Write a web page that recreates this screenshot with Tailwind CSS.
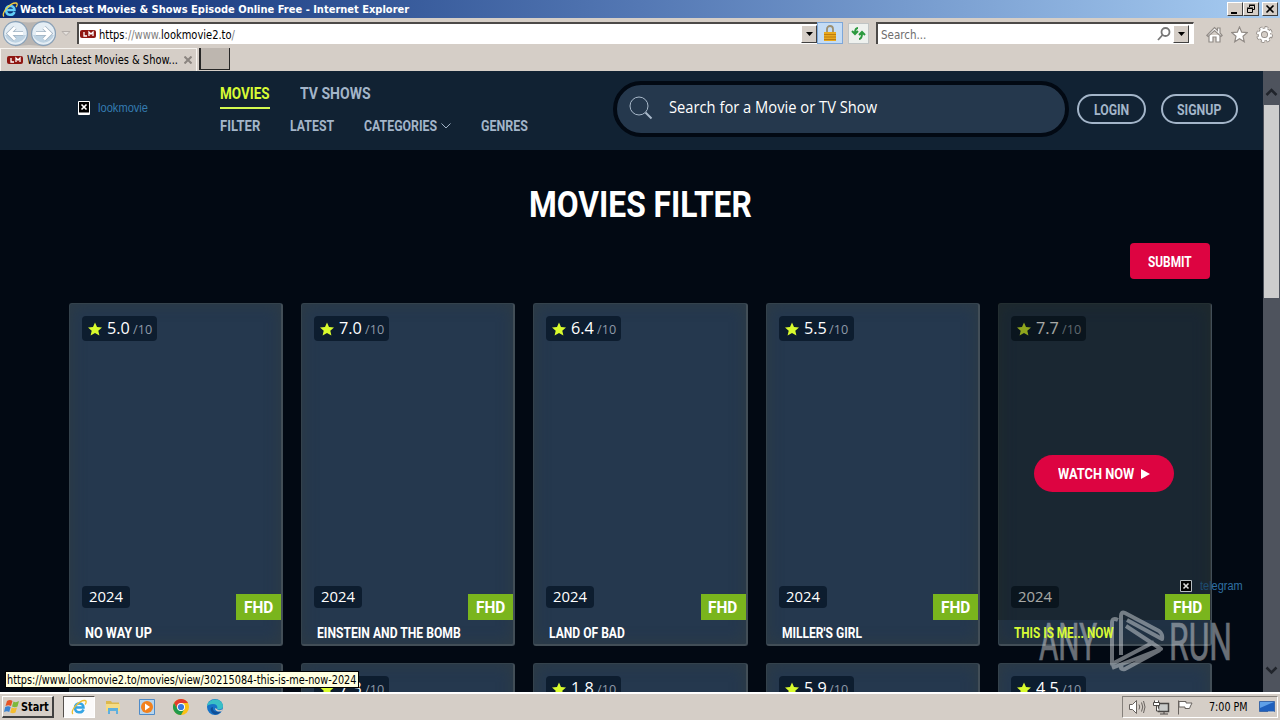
<!DOCTYPE html>
<html lang="en">
<head>
    <meta charset="UTF-8">
    <meta name="viewport" content="width=device-width, initial-scale=1.0">
    <title>Watch Latest Movies & Shows Episode Online Free</title>
    <script src="https://cdn.jsdelivr.net/npm/@tailwindcss/browser@4"></script>
</head>
<body class="relative flex h-[720px] w-[1280px] flex-col overflow-hidden bg-[#d5cec7] font-['DejaVu_Sans_Condensed',sans-serif] text-[11px] leading-none text-black">
    <!-- Window title -->
    <div class="flex h-[18px] shrink-0 items-center bg-linear-to-r from-[#0b2a72] via-[#5478b4] via-50% to-[#a8cdf2] pl-[2px]">
        <svg class="mr-[2px] h-[17px] w-4 shrink-0" viewBox="0 0 16 16"><path d="M12.500 10.500C11 14.500 4 14.500 4 8.500 4 3 12.500 3 12.500 8.500H5" fill="none" stroke="#62cdf7" stroke-width="2.500"/><path d="M2 15C-1 12 8 1 14 1.500c2 .3 1 3 0 4" fill="none" stroke="#f4cf3e" stroke-width="1.300"/></svg>
        <span data-fit="389" class="font-['DejaVu_Sans'] text-[11px] font-bold text-white">Watch Latest Movies &amp; Shows Episode Online Free - Internet Explorer</span>
        <div class="mr-[2px] ml-auto flex">
            <div class="flex h-[14px] w-4 items-center justify-center border border-t-white border-r-[#404040] border-b-[#404040] border-l-white bg-[#d5cec7]"><svg class="h-[10px] w-[10px]" viewBox="0 0 10 10"><path d="M1 8h6v2H1z"/></svg></div>
            <div class="mr-[3px] flex h-[14px] w-4 items-center justify-center border border-t-white border-r-[#404040] border-b-[#404040] border-l-white bg-[#d5cec7]"><svg class="h-[10px] w-[10px]" viewBox="0 0 10 10" fill="none" stroke="#000"><path d="M3.500 3V1.500h5v4H7M3 1h6M1.500 4.500h5v4h-5zM1 4h6"/></svg></div>
            <div class="flex h-[14px] w-4 items-center justify-center border border-t-white border-r-[#404040] border-b-[#404040] border-l-white bg-[#d5cec7]"><svg class="h-[10px] w-[10px]" viewBox="0 0 10 10" stroke="#000" stroke-width="1.600"><path d="M1.500 1.500l7 7M8.500 1.500l-7 7"/></svg></div>
        </div>
    </div>

    <!-- Address bar -->
    <div class="flex h-[30px] shrink-0 items-center">
        <svg class="h-[30px] w-[77px] shrink-0" viewBox="0 0 77 30">
            <path d="M15 2.500q14 4 28 0a13 13 0 010 26q-14-3-28 0z" fill="#b9b5b2"/>
            <circle cx="15.500" cy="15.500" r="12.500" fill="#87a0b8"/><circle cx="43.500" cy="15.500" r="12.500" fill="#87a0b8"/>
            <circle cx="15.500" cy="15.500" r="11.300" fill="#e4edf4"/><circle cx="43.500" cy="15.500" r="11.300" fill="#e4edf4"/>
            <path d="M5 17h21a11 11 0 01-21 0zM33 17h21a11 11 0 01-21 0z" fill="#bdd2e2"/>
            <path d="M23 15.500H10M15 9.500l-6 6 6 6M36 15.500h13M44 9.500l6 6-6 6" fill="none" stroke="#a0b2c2" stroke-width="4.500"/>
            <path d="M23 15.500H10M15 9.500l-6 6 6 6M36 15.500h13M44 9.500l6 6-6 6" fill="none" stroke="#fff" stroke-width="3"/>
            <path d="M62 13.500h8l-4 4z" fill="#e4e0dc" stroke="#b4aeaa"/>
        </svg>
        <div class="flex h-[22px] w-[740px] items-center border-t-2 border-l-2 border-[#4c4a48] bg-white pl-px">
            <svg class="mr-[3px] h-[10px] w-4 shrink-0" viewBox="0 0 16 10"><rect y="1" width="16" height="8" rx="2" fill="#8f1712"/><path d="M4 3v4h3M9 7V3l2 2 2-2v4" fill="none" stroke="#fff" stroke-width="1.300"/></svg>
            <span data-fit="136" class="pt-px text-[12px] text-[#808080]"><span class="text-black">https</span>://www.<span class="text-black">lookmovie2.to</span>/</span>
            <div class="ml-auto flex h-[18px] w-4 items-center justify-center border border-t-white border-r-[#404040] border-b-[#404040] border-l-white bg-[#d5cec7]"><svg class="h-1 w-[7px]" viewBox="0 0 7 4"><path d="M0 0h7L3.500 4z"/></svg></div>
        </div>
        <div class="flex h-[22px] w-[26px] items-center justify-center border border-[#7da7d9] bg-[#c4dcf5]">
            <svg class="h-4 w-[14px]" viewBox="0 0 14 16"><path d="M4 8V4a3 3 0 016 0v4" fill="none" stroke="#9c8f70" stroke-width="1.800"/><path d="M1 7h12v9H1z" fill="#e9a91f"/><path d="M1 9.500h12M1 12h12M1 14.500h12" stroke="#bd7d10"/></svg>
        </div>
        <div class="ml-[5px] flex h-[21px] w-[21px] items-center justify-center border border-[#c0c4c4] bg-[#eef1ee]">
            <svg class="h-[15px] w-[15px]" viewBox="0 0 15 15" fill="none" stroke="#2b9a3e" stroke-width="2"><path d="M7 2Q4 2 4 7M1 5l3 3 3-3M8 13q3 0 3-6M8 9l3-3 3 3"/></svg>
        </div>
        <div class="ml-[7px] flex h-[22px] w-[318px] items-center border-t-2 border-r border-l-2 border-[#4c4a48] border-r-white bg-white pl-[3px]">
            <span data-fit="45" class="pt-px text-[12px] text-[#6d6d6d]">Search...</span>
            <svg class="mr-[2px] ml-auto h-[14px] w-[14px]" viewBox="0 0 14 14" fill="none" stroke="#777" stroke-width="1.800"><circle cx="8.500" cy="5" r="4"/><path d="M5.500 8L1 13"/></svg>
            <div class="mr-1 flex h-[18px] w-4 items-center justify-center border border-t-white border-r-[#404040] border-b-[#404040] border-l-white bg-[#d5cec7]"><svg class="h-1 w-[7px]" viewBox="0 0 7 4"><path d="M0 0h7L3.500 4z"/></svg></div>
        </div>
        <div class="ml-[12px] flex gap-[8px] pt-[3px]">
            <svg class="h-[17px] w-[17px]" viewBox="0 0 17 17" fill="#fff" stroke="#918b86" stroke-width="1.200"><path d="M3 9v7h4v-5h3v5h4V9M.8 9.500L8.500 1.500l3 3V2H14v5l2.200 2.500-1.200 1L8.500 4.500l-6.500 6z"/></svg>
            <svg class="h-[17px] w-[17px]" viewBox="0 0 17 17" fill="#fff" stroke="#918b86" stroke-width="1.200"><path d="M8.500 1l2.200 5.200 5.500.4-4.200 3.700 1.300 5.500-4.800-3-4.800 3L5 10.300.8 6.600l5.500-.4z"/></svg>
            <svg class="h-[17px] w-[17px]" viewBox="0 0 17 17" fill="none"><circle cx="8.500" cy="8.500" r="6.600" stroke="#918b86" stroke-width="3.600" stroke-dasharray="3.200 1.980"/><circle cx="8.500" cy="8.500" r="4.700" stroke="#918b86" stroke-width="4.200"/><circle cx="8.500" cy="8.500" r="6.300" stroke="#fff" stroke-width="2.400" stroke-dasharray="2.300 2.650"/><circle cx="8.500" cy="8.500" r="4.700" stroke="#fff" stroke-width="2.400"/></svg>
        </div>
    </div>

    <!-- Tabs -->
    <div class="flex h-[23px] shrink-0">
        <div class="flex w-[197px] items-center border-t border-r border-l border-[#f7f4f0] pl-[6px]">
            <svg class="mr-[4px] h-[10px] w-4 shrink-0" viewBox="0 0 16 10"><rect y="1" width="16" height="8" rx="2" fill="#8f1712"/><path d="M4 3v4h3M9 7V3l2 2 2-2v4" fill="none" stroke="#fff" stroke-width="1.300"/></svg>
            <span data-fit="151" class="text-[12px]">Watch Latest Movies &amp; Show...</span>
            <svg class="mr-[4px] ml-auto h-2 w-2" viewBox="0 0 8 8" stroke="#8b8580" stroke-width="2"><path d="M.5.5l7 7M7.500.5l-7 7"/></svg>
        </div>
        <div class="ml-[2px] h-[22px] w-[31px] border-r border-b border-l-2 border-[#262626] bg-[#bdb6af]"></div>
    </div>

    <!-- Page viewport -->
    <div class="flex h-[621px] shrink-0 overflow-hidden">
        <div class="relative h-full w-[1263px] overflow-hidden bg-[#020913] font-[Roboto,sans-serif] text-white">
            <header class="flex h-[79px] bg-[#112233]">
                <div class="flex h-[74px] w-[220px] items-center pl-[78px]">
                    <svg class="mr-2 h-[14px] w-3" viewBox="0 0 12 14"><path d="M.5.5h11v13H.5z" fill="#000" stroke="#fff"/><path d="M1 11.500h10V13H1z" fill="#fff"/><path d="M3.500 3.500l5 5M8.500 3.500l-5 5" stroke="#fff" stroke-width="1.600"/></svg>
                    <span data-fit="50" class="pb-px font-['Liberation_Sans'] text-[12px] text-[#347bb0]">lookmovie</span>
                </div>
                <nav class="w-[393px] font-bold text-[#a3b5c9]">
                    <div class="flex gap-[30px] pt-3 text-[17px]">
                        <a class="flex h-[26px] w-[50px] border-b-2 border-[#d3fa4f] pt-[2px] text-[#d8fb35]"><span data-fit="50">MOVIES</span></a>
                        <a class="pt-[2px]"><span data-fit="71">TV SHOWS</span></a>
                    </div>
                    <div class="flex items-center gap-[30px] pt-[10px] text-[14px]">
                        <span data-fit="40">FILTER</span>
                        <span data-fit="44">LATEST</span>
                        <span class="flex w-[87px] items-center gap-[4px]"><span data-fit="73">CATEGORIES</span><svg class="h-[6px] w-[10px]" viewBox="0 0 10 6" fill="none" stroke="#a3b5c9"><path d="M.5.5L5 5 9.500.5"/></svg></span>
                        <span data-fit="47">GENRES</span>
                    </div>
                </nav>
                <div class="mt-[10px] flex h-[56px] w-[456px] items-center rounded-full border-4 border-[#020913] bg-[#25384d] pb-[2px] pl-[12px]">
                    <svg class="mr-[16px] h-6 w-6" viewBox="0 0 24 24" fill="none" stroke="#a9b9ca"><circle cx="10" cy="10" r="9"/><path d="M16.500 16.500l6 6" stroke-width="2"/></svg>
                    <span data-fit="208" class="font-['Open_Sans'] text-[15.500px]">Search for a Movie or TV Show</span>
                </div>
                <div class="ml-2 flex h-[76px] items-center gap-[15px] text-[14px] font-bold text-[#a3b5c9]">
                    <span class="flex h-[30px] w-[69px] items-center justify-center rounded-full border-2 border-[#a3b5c9] pt-[2px]"><span data-fit="35">LOGIN</span></span>
                    <span class="flex h-[30px] w-[77px] items-center justify-center rounded-full border-2 border-[#a3b5c9] pt-[2px]"><span data-fit="44">SIGNUP</span></span>
                </div>
            </header>

            <main class="ml-[69px] w-[1143px]">
                <h1 class="flex h-[93px] justify-center pt-[37px] text-[36px] font-bold"><span data-fit="223">MOVIES FILTER</span></h1>
                <div class="flex h-[60px] justify-end pr-[2px]">
                    <button class="flex h-9 w-20 items-center justify-center rounded bg-[#dd0441] pt-[2px] text-[14px] font-bold"><span data-fit="44">SUBMIT</span></button>
                </div>
                <div id="movies" class="grid grid-cols-5 gap-x-[18px] gap-y-[17px]"></div>
            </main>

            <div class="absolute top-[508px] left-[1180px] flex items-center gap-2">
                <svg class="h-[14px] w-3" viewBox="0 0 12 14"><path d="M.5 1.500h11v11H.5z" fill="#000" stroke="#b8bec2"/><path d="M3.500 4.500l5 5M8.500 4.500l-5 5" stroke="#ddd" stroke-width="1.600"/></svg>
                <span data-fit="43" class="font-['Liberation_Sans'] text-[12px] text-[#2f70a3]"><span class="text-[#1d4c72]">tel</span>egram</span>
            </div>
        </div>

        <!-- Scrollbar -->
        <div class="flex h-full w-[17px] flex-col bg-[#4e535d]">
            <svg class="h-[34px] w-[17px] shrink-0" viewBox="0 0 17 34" fill="none" stroke="#20242b" stroke-width="2.500"><path d="M3.500 24l5-5 5 5"/></svg>
            <div class="ml-[1px] h-[193px] w-[15px] bg-[#cdcdcd]"></div>
            <svg class="mt-auto h-[34px] w-[17px] shrink-0" viewBox="0 0 17 34" fill="none" stroke="#20242b" stroke-width="2.500"><path d="M3.500 9.500l5 5 5-5"/></svg>
        </div>
    </div>

    <!-- Taskbar -->
    <div class="flex h-7 shrink-0 items-center border-t-2 border-white bg-[#d5cec7] pl-[2px]">
        <div class="flex h-[22px] w-[52px] items-center border border-t-white border-r-2 border-r-[#404040] border-b-2 border-b-[#404040] border-l-white pl-[1px]">
            <svg class="mr-[1px] h-[15px] w-4 shrink-0" viewBox="0 0 16 15"><path d="M3 2q3-2 5.500 0L7 7Q4.500 5.500 1.500 7z" fill="#e65325"/><path d="M9.500 2.500Q12 4 15 2l-1.500 5.500Q11 9 8 7.500z" fill="#7db93b"/><path d="M1.200 8q3-1.500 5.500 0L5.200 13Q3 11.500 0 13z" fill="#3b83d2"/><path d="M7.700 8.500Q10.500 10 13 8.500L11.500 13.500Q9 15 6.200 13.500z" fill="#f5bd30"/></svg>
            <span data-fit="28" class="text-[12px] font-bold">Start</span>
        </div>
        <div class="ml-[9px] flex h-[22px] w-8 items-center justify-center border border-t-[#55504c] border-r-white border-b-white border-l-[#55504c] bg-[#fbfafa]">
            <svg class="h-4 w-4" viewBox="0 0 16 16"><path d="M12.500 10.500C11 14.500 4 14.500 4 8.500 4 3 12.500 3 12.500 8.500H5" fill="none" stroke="#35a5e4" stroke-width="2.500"/><path d="M2 15C-1 12 8 1 14 1.500c2 .3 1 3 0 4" fill="none" stroke="#efbf2f" stroke-width="1.300"/></svg>
        </div>
        <div class="ml-[10px] flex gap-[18px]">
            <svg class="h-4 w-4" viewBox="0 0 16 16"><path d="M1 2h5l1 1.500h7V12H1z" fill="#dcb84e"/><path d="M1 5h14v7H1z" fill="#f5dc85"/><path d="M3 9h10v6h-2v-3H5v3H3z" fill="#5fb0de"/></svg>
            <svg class="h-4 w-4" viewBox="0 0 16 16"><path d="M.5.5h15v15H.5z" fill="#b7d5ed" stroke="#4f8bc8"/><circle cx="8" cy="8" r="6" fill="#f2811d"/><path d="M6 4.500l5 3.500-5 3.500z" fill="#fff"/></svg>
            <svg class="h-4 w-4" viewBox="0 0 16 16"><circle cx="8" cy="8" r="8" fill="#fbc116"/><path d="M1.100 4A8 8 0 0115 4H8L4.500 10z" fill="#e33b2e"/><path d="M1.070 4A8 8 0 008 16l3.400-6H4.500z" fill="#229a4c"/><circle cx="8" cy="8" r="4" fill="#fff"/><circle cx="8" cy="8" r="3.100" fill="#3879e0"/></svg>
            <svg class="h-4 w-4" viewBox="0 0 16 16"><circle cx="8" cy="8" r="8" fill="#1773c7"/><path d="M0 7C1-1 15-2 16 7c0 4-5 4-6 3 1-2 0-5-4-5-3 0-5 1-6 2z" fill="#39bfc6"/><path d="M6 8c-1 4 3 6 8 4-2 4-8 5-10 0-1-2 0-4 2-4z" fill="#104f98"/><path d="M10 10c1 2 4 1 6 0l-1.500 2.500C11 13 8 12 8 9z" fill="#d5cec7"/></svg>
        </div>
        <div class="mr-[2px] ml-auto flex h-[22px] w-[156px] items-center border border-t-[#85807b] border-r-white border-b-white border-l-[#85807b] pl-[6px]">
            <svg class="h-[14px] w-[17px]" viewBox="0 0 17 14" fill="none" stroke="#68635f"><path d="M.5 4.500h3l4-4v13l-4-4h-3z" fill="#fff"/><path d="M10 4.500q1.500 2.500 0 5M12.500 2.500q2.500 4.500 0 9M14.500 1q3 6 0 12"/></svg>
            <svg class="ml-[7px] h-[15px] w-[17px]" viewBox="0 0 17 15" fill="#fff" stroke="#4a4745"><path d="M5.500 3.500h10v8h-10z" fill="#c9cbca" stroke-width="1.500"/><path d="M7 14h8M11 12v2M1.500.5v4h4v-4M3.500 5v6h3"/><path d="M.5 2.500h6v3h-6z"/></svg>
            <svg class="ml-[7px] h-[15px] w-4" viewBox="0 0 16 15" fill="#fff" stroke="#68635f"><path d="M1.500.5v14M2 1.500h7v1.500h6L13.500 6l-1 2.500H8V7H2z"/></svg>
            <span data-fit="39" class="ml-[16px] text-[12px]">7:00 PM</span>
            <svg class="mr-[2px] ml-auto h-3 w-4" viewBox="0 0 16 12"><path d="M.5.5h15v10H.5z" fill="#1f60bd" stroke="#3c68a8"/><path d="M1 1h14L1 7z" fill="#5fa0e8"/><path d="M9 11h6" stroke="#ddd"/></svg>
        </div>
    </div>

    <!-- Link target tooltip -->
    <div class="absolute top-[671px] left-[5px] z-10 flex h-[17px] w-[354px] items-center border border-black bg-[#ffffe1] pl-[1px]">
        <span data-fit="349" class="text-[12px]">https://www.lookmovie2.to/movies/view/30215084-this-is-me-now-2024</span>
    </div>

    <!-- Watermark -->
    <svg class="absolute top-[606px] left-[1036px] h-[70px] w-[200px] opacity-50" viewBox="0 0 200 70" fill="none">
        <g class="font-[Roboto]" fill="#d0d4d8" stroke="#d0d4d8" stroke-width=".7" font-size="52">
            <text x="3" y="54" textLength="58" lengthAdjust="spacingAndGlyphs">ANY</text>
            <text x="133" y="54" textLength="63" lengthAdjust="spacingAndGlyphs">RUN</text>
        </g>
        <g stroke="#d0d4d8" stroke-width="4" stroke-linejoin="round">
            <path d="M85 49V10q0-5 4-3l34 18q4 3 3 8L91 14M82 14q-6-3-6 3v41l42-22M90 20l35 23-49 19M86 59q-3 5 3 4l35-19"/>
        </g>
    </svg>

    <script>
        const movies = [
            { title: 'NO WAY UP', rating: '5.0', width: 67 },
            { title: 'EINSTEIN AND THE BOMB', rating: '7.0', width: 144 },
            { title: 'LAND OF BAD', rating: '6.4', width: 76 },
            { title: "MILLER'S GIRL", rating: '5.5', width: 80 },
            { title: 'THIS IS ME... NOW', rating: '7.7', width: 100, active: true },
            {},
            { rating: '7.3' },
            { rating: '1.8' },
            { rating: '5.9' },
            { rating: '4.5' }
        ];

        function createMovieCard(movie) {
            const card = document.createElement('div');
            card.className = 'relative h-[343px] rounded-[3px] border-t border-l border-r-2 border-b-2 border-t-[#34424c] border-l-[#34424c] border-r-[#424e57] border-b-[#424e57] bg-[#25384e] shadow-[inset_0_0_14px_2px_#2d3b45]';
            card.innerHTML = `
                <div class="flex h-full flex-col pl-3">
                    ${movie.rating ? `
                    <div class="mt-3 flex h-[25px] w-[75px] items-center rounded bg-[#0d1d2f] pl-[6px]">
                        <svg class="mr-[5px] h-[14px] w-[14px]" viewBox="0 0 14 14" fill="#d9fb2d"><path d="M7 .5l2 4.500 5 .4-3.700 3.300 1.100 4.900L7 11l-4.400 2.600 1.100-4.900L0 5.400 5 5z"/></svg>
                        <span data-fit="23" class="font-['Open_Sans'] text-[15.500px]">${movie.rating}</span>
                        <span data-fit="19" class="ml-[3px] pt-[2px] font-['Open_Sans'] text-[12px] text-[#8e9aa8]">/10</span>
                    </div>` : ''}
                    ${movie.title ? `
                    <div class="mt-[245px] flex h-[22px] w-[48px] items-center justify-center rounded bg-[#0d1d2f]"><span data-fit="34" class="font-['Open_Sans'] text-[14px]">2024</span></div>
                    <div class="mt-[18px] ml-[3px] text-[14px] font-bold"><span data-fit="${movie.width}" class="${movie.active ? 'relative z-10 text-[#d8fb35]' : ''}">${movie.title}</span></div>` : ''}
                </div>
                ${movie.active ? `
                <div class="absolute -inset-x-px -top-px bottom-[24px] bg-[#060800]/35"></div>
                <div class="absolute inset-x-0 bottom-0 h-[24px] bg-[#0f191f]/20"></div>
                <div class="absolute top-[151px] left-[35px] flex h-[37px] w-[140px] items-center justify-center gap-[7px] rounded-full bg-[#dd0441] pt-px text-[14px] font-bold">
                    <span data-fit="76">WATCH NOW</span>
                    <svg class="h-[10px] w-[9px]" viewBox="0 0 9 10" fill="#fff"><path d="M0 0l9 5-9 5z"/></svg>
                </div>` : ''}
                ${movie.title ? `
                <div class="absolute right-0 bottom-[24px] flex h-[26px] w-[45px] items-center justify-center bg-[#7ab51d] pt-px text-[17px] font-bold"><span data-fit="29">FHD</span></div>` : ''}
            `;
            return card;
        }

        // Squeeze each label to its own set width
        function fitLabel(label) {
            const natural = label.offsetWidth;
            const width = Number(label.dataset.fit);
            if (!natural) return;
            label.style.transform = `scaleX(${width / natural})`;
            label.style.marginRight = `${width - natural}px`;
        }

        const grid = document.getElementById('movies');
        movies.forEach(movie => grid.appendChild(createMovieCard(movie)));

        // Fit again when a label's font or size changes
        const observer = new ResizeObserver(entries => entries.forEach(entry => fitLabel(entry.target)));
        document.querySelectorAll('[data-fit]').forEach(label => {
            label.style.display = 'inline-block';
            label.style.whiteSpace = 'nowrap';
            label.style.flexShrink = 0;
            label.style.transformOrigin = 'left';
            observer.observe(label);
        });
        window.addEventListener('load', () => document.querySelectorAll('[data-fit]').forEach(fitLabel));
    </script>
</body>
</html>
